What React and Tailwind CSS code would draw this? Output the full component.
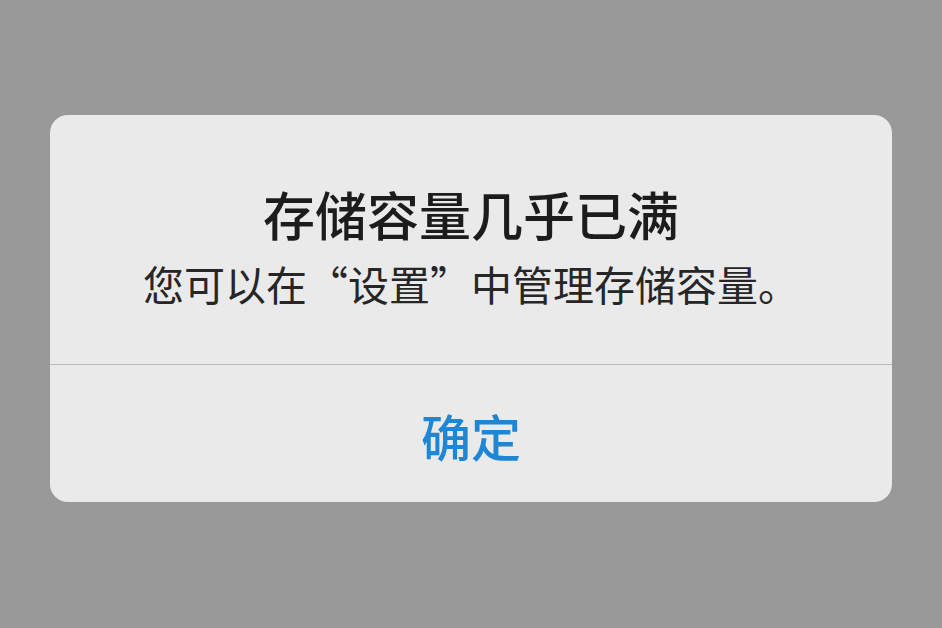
import React from 'react';

const font = { fontFamily: '"Noto Sans CJK SC", "Noto Sans", sans-serif' };

const StorageAlert = () => {
  return (
    <div className="w-[842px] rounded-[18px] bg-[#eaeaeb] overflow-hidden" style={font}>
      {/* message */}
      <div className="flex flex-col items-center pt-[69px] pb-[57px]">
        <h2 className="text-[52px] leading-[60px] font-medium text-[#1c1c1c]">存储容量几乎已满</h2>
        <p className="mt-[15px] text-[41px] leading-[48px] text-[#262626]">
          您可以在“设置”中管理存储容量。
        </p>
      </div>
      <div className="h-px bg-[#b9b9bb]" />
      {/* action */}
      <button className="w-full h-[137px] flex items-center justify-center pt-[4px] text-[50px] font-medium text-[#1f86d3]">
        确定
      </button>
    </div>
  );
};

export default function App() {
  return (
    <div className="w-[942px] h-[628px] bg-[#999999] flex items-start justify-center pt-[115px]">
      <StorageAlert />
    </div>
  );
}
